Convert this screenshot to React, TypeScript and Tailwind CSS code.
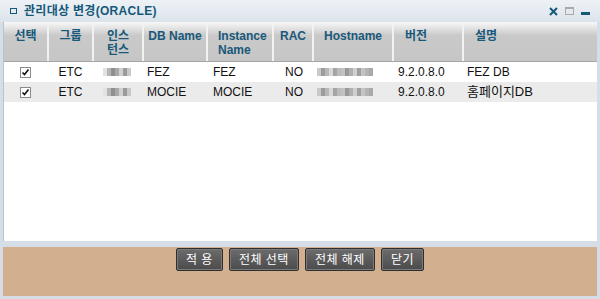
const cols = [
  { key: "sel", label: ["선택"], w: "w-[45px]", head: "justify-center", body: "justify-center" },
  { key: "grp", label: ["그룹"], w: "w-[45px]", head: "justify-center", body: "justify-center" },
  { key: "inst", label: ["인스", "턴스"], w: "w-[50px]", head: "justify-center", body: "pl-[9px]" },
  { key: "db", label: ["DB Name"], w: "w-[64px]", head: "justify-center", body: "pl-[3px]" },
  { key: "iname", label: ["Instance", "Name"], w: "w-[66px]", head: "pl-[10px]", body: "pl-[5px]" },
  { key: "rac", label: ["RAC"], w: "w-[40px]", head: "justify-center", body: "pl-[11px]" },
  { key: "host", label: ["Hostname"], w: "w-[80px]", head: "justify-center", body: "pl-[3px]" },
  { key: "ver", label: ["버전"], w: "w-[70px]", head: "pl-[11px]", body: "pl-[4px]" },
  { key: "desc", label: ["설명"], w: "flex-1", head: "pl-[11px]", body: "pl-[3px]" },
];

const rows = [
  { db: "FEZ", iname: "FEZ", rac: "NO", ver: "9.2.0.8.0", desc: "FEZ DB" },
  { db: "MOCIE", iname: "MOCIE", rac: "NO", ver: "9.2.0.8.0", desc: "홈페이지DB" },
];

const blurInst = ["#e2e2e2", "#b5b5b5", "#8f8f8f", "#a8a8a8", "#d0d0d0", "#9a9a9a", "#c8c8c8"];
const blurHost = ["#c9c9c9", "#9c9c9c", "#b8b8b8", "#d8d8d8", "#a5a5a5", "#bcbcbc", "#c2c2c2", "#999999", "#b0b0b0", "#cfcfcf", "#a0a0a0", "#c4c4c4", "#b4b4b4", "#a9a9a9"];

function Blur({ shades, cell }: { shades: string[]; cell: number }) {
  return (
    <div className="flex h-[8px]">
      {shades.map((c, i) => (
        <div key={i} className="h-full" style={{ width: cell, background: c }} />
      ))}
    </div>
  );
}

function Check() {
  return (
    <div className="w-[11px] h-[11px] border border-[#8a8a8a] bg-white flex items-center justify-center">
      <svg width="9" height="9" viewBox="0 0 9 9">
        <path d="M1.5 4.5 L3.5 6.5 L7.5 1.5" fill="none" stroke="#111" strokeWidth="1.6" />
      </svg>
    </div>
  );
}

export default function App() {
  return (
    <div
      className="w-[600px] h-[299px] bg-[#d5dee7] flex flex-col overflow-hidden"
      style={{ fontFamily: '"Liberation Sans", "Noto Sans CJK KR", sans-serif' }}
    >
      {/* title bar */}
      <div className="h-[22px] flex items-center bg-gradient-to-b from-[#eef2f6] to-[#dbe3eb] pl-[10px] pr-[10px]">
        <div className="w-[7px] h-[6px] border-[1.5px] border-[#15597a]" />
        <span className="ml-[7px] text-[12px] font-bold text-[#15597a] tracking-[0.3px]">관리대상 변경(ORACLE)</span>
        <div className="ml-auto flex items-center gap-[7px]">
          <svg width="9" height="9" viewBox="0 0 9 9">
            <path d="M1 1 L8 8 M8 1 L1 8" stroke="#15597a" strokeWidth="2" />
          </svg>
          <div className="w-[9px] h-[8px] border border-[#a9a9a9] border-t-2" />
          <div className="w-[9px] h-[3px] bg-[#15597a] mt-[4px]" />
        </div>
      </div>

      {/* table area */}
      <div className="mx-[3px] h-[219px] bg-white border-l border-[#b9c6d2] flex flex-col">
        <div className="h-[40px] flex bg-gradient-to-b from-[#f8f8f8] via-[#c9c9c9] via-35% to-[#c6c6c6] border-b border-[#a6a6a6]">
          {cols.map((c, i) => (
            <div
              key={c.key}
              className={`${c.w} flex ${c.head} pt-[7px] ${i < cols.length - 1 ? "border-r-2 border-[#f2f2f2]" : ""}`}
            >
              <div className={`text-[12px] font-bold text-[#18587a] leading-[14px] whitespace-nowrap ${c.head === "justify-center" ? "text-center" : ""}`}>
                {c.label.map((l) => (
                  <div key={l}>{l}</div>
                ))}
              </div>
            </div>
          ))}
        </div>
        {rows.map((r, ri) => (
          <div key={ri} className={`h-[20px] flex text-[12px] text-[#111] ${ri % 2 ? "bg-[#ebebeb]" : "bg-white"}`}>
            {cols.map((c) => (
              <div key={c.key} className={`${c.w} flex items-center ${c.body} pr-[2px]`}>
                {c.key === "sel" && <Check />}
                {c.key === "grp" && "ETC"}
                {c.key === "inst" && <Blur shades={blurInst} cell={4} />}
                {c.key === "host" && <Blur shades={blurHost} cell={4} />}
                {c.key === "db" && r.db}
                {c.key === "iname" && r.iname}
                {c.key === "rac" && r.rac}
                {c.key === "ver" && r.ver}
                {c.key === "desc" && <span className={ri ? "text-[13px]" : ""}>{r.desc}</span>}
              </div>
            ))}
          </div>
        ))}
      </div>

      {/* button area */}
      <div className="mx-[3px] mt-[6px] h-[49px] bg-[#d2af8f] flex justify-center gap-[6px] pt-[1px]">
        {["적 용", "전체 선택", "전체 해제", "닫기"].map((b) => (
          <button
            key={b}
            className="h-[23px] px-[9px] rounded-[2px] border border-[#2f2f2f] bg-gradient-to-b from-[#6c6c6c] to-[#4b4b4b] text-white text-[12px] tracking-[0.5px] leading-none shadow-[inset_0_0_0_1px_#7a7a7a]"
          >
            {b}
          </button>
        ))}
      </div>
    </div>
  );
}
